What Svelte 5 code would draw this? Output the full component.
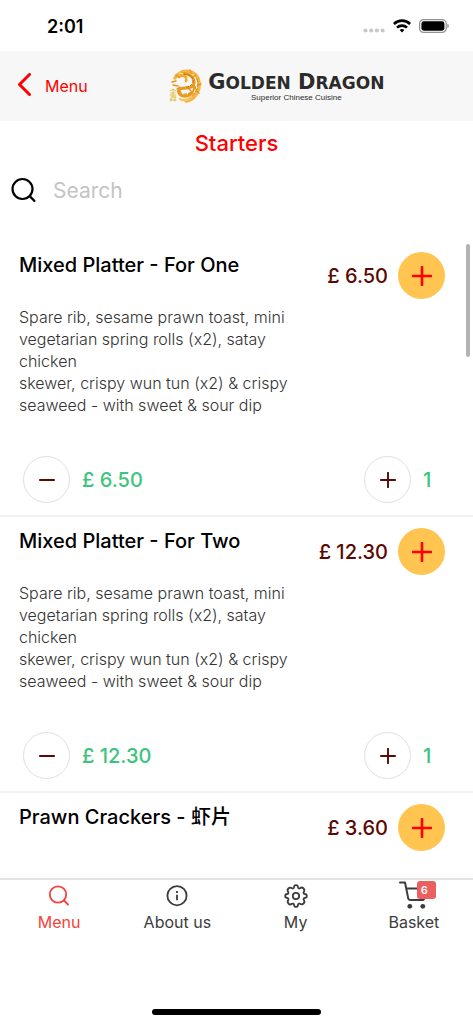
<script>
  let query = $state('');
  let activeTab = $state('Menu');

  const platter = 'Spare rib, sesame prawn toast, mini vegetarian spring rolls (x2), satay chicken\nskewer, crispy wun tun (x2) & crispy seaweed - with sweet & sour dip';

  let items = $state([
    { id: 1, name: 'Mixed Platter - For One', price: 6.5, text: platter, qty: 1 },
    { id: 2, name: 'Mixed Platter - For Two', price: 12.3, text: platter, qty: 1 },
    { id: 3, name: 'Prawn Crackers - 虾片', price: 3.6, text: '', qty: 0 }
  ]);

  let basketCount = $state(6);

  const tabs = ['Menu', 'About us', 'My', 'Basket'];

  let visible = $derived(items.filter((i) => i.name.toLowerCase().includes(query.toLowerCase())));

  function money(n) {
    return `£ ${n.toFixed(2)}`;
  }

  function add(item) {
    basketCount += item.qty || 1;
  }
</script>

{#snippet plus(size)}
  <svg width={size} height={size} viewBox="0 0 20 20" fill="none" stroke="currentColor" stroke-linecap="round" aria-hidden="true">
    <path d="M10 1v18M1 10h18" />
  </svg>
{/snippet}

<div class="screen">
  <div class="status">
    <span class="time">2:01</span>
    <div class="signals">
      <svg width="22" height="14" viewBox="0 0 22 14" fill="#c8c8c8">
        <circle cx="2.5" cy="11.5" r="2.1" /><circle cx="8.2" cy="11.5" r="2.1" /><circle cx="13.9" cy="11.5" r="2.1" /><circle cx="19.6" cy="11.5" r="2.1" />
      </svg>
      <svg width="18" height="14" viewBox="0 0 18 14" fill="none" stroke="#000" stroke-width="2.6">
        <path d="M.9 5a11.5 11.5 0 0 1 16.2 0" />
        <path d="M4 8.6a7.2 7.2 0 0 1 10 0" />
        <path d="M9 13.6l-2.4-2.5a3.5 3.5 0 0 1 4.8 0z" fill="#000" stroke="none" />
      </svg>
      <svg width="30" height="14" viewBox="0 0 30 14">
        <rect x="0.6" y="0.6" width="26.6" height="12.8" rx="4" fill="none" stroke="#929292" stroke-width="1.2" />
        <rect x="2.4" y="2.3" width="23" height="9.4" rx="2.4" />
        <path d="M28.4 4.8q1.5.6 1.5 2.2t-1.5 2.2z" fill="#929292" />
      </svg>
    </div>
  </div>

  <header>
    <button class="back">
      <svg width="16" height="26" viewBox="0 0 16 26" fill="none" stroke="currentColor" stroke-width="3" stroke-linecap="round" stroke-linejoin="round">
        <path d="M12.5 1.5L2.5 11.5l10 10" />
      </svg>
      Menu
    </button>
    <div class="brand">
      <svg width="34" height="34" viewBox="0 0 34 34" fill="none" stroke-linecap="round">
        <!-- coiled body -->
        <path d="M7 9C10 3 17 1 23 3s9 8 8 15-6 13-13 14" stroke="#f4b640" stroke-width="3.4" />
        <path d="M14 5c6-1 11 2 12 7s-3 7-8 7-9 1-7 5 8 4 12 1 4-7 3-8" stroke="#e99a1c" stroke-width="3" />
        <path d="M11 8c4-3 9 0 7 4" stroke="#f1a82c" stroke-width="2.6" />
        <path d="M12 30c3 2 8 1 11-2" stroke="#f6c662" stroke-width="2.4" />
        <!-- scales and claws -->
        <path d="M16 5c5 0 9 3 9 7s-4 6-8 6" stroke="#c5700c" stroke-dasharray="2 2" />
        <path d="M29 10c2 6 0 13-5 17M12 22c1 4 7 4 11 1" stroke="#cf7d10" stroke-dasharray="3 2" />
        <path d="M4 13l4-1M5 16l5 1M8 6l3 2M22 1l1 3M28 6l-3 2M33 15l-3 1M31 24l-3-2M9 20l3-2M20 19l3 3" stroke="#e2951f" stroke-width="1.4" />
        <path d="M19 9l2 3M27 15l2 3M15 24l4-1M27 21l-1 3M12 4l3 1" stroke="#fff0c4" />
        <!-- seal marks -->
        <path d="M2 22l3-2 3 2M3 24h4M5 21v4M2 26h6M3 28h5M5 26v3M2 31h6M3 29v3M7 28v4" stroke="#dfc050" />
      </svg>
      <div class="wordmark">
        <span class="name">G<small>OLDEN</small> D<small>RAGON</small></span>
        <span class="tagline">Superior Chinese Cuisine</span>
      </div>
    </div>
  </header>

  <h1>Starters</h1>

  <div class="search">
    <label for="search" aria-label="Search">
      <svg width="26" height="26" viewBox="0 0 26 26" fill="none" stroke="#000" stroke-width="2.2" stroke-linecap="round">
        <circle cx="11.5" cy="12" r="10" /><path d="M18.8 19.3l4.6 4.6" />
      </svg>
    </label>
    <input id="search" type="text" placeholder="Search" bind:value={query} />
  </div>

  <main>
    {#each visible as item (item.id)}
      <article>
        <div class="head">
          <h2>{item.name}</h2>
          <span class="price">{money(item.price)}</span>
          <button class="round add" aria-label="Add {item.name} to basket" onclick={() => add(item)}>
            {@render plus(20)}
          </button>
        </div>
        {#if item.text}
          <p>{item.text}</p>
          <div class="quantity">
            <button class="round" aria-label="Less" onclick={() => item.qty > 1 && item.qty--}>
              <svg width="16" height="16" viewBox="0 0 20 20" fill="none" stroke="currentColor" stroke-linecap="round"><path d="M1 10h18" /></svg>
            </button>
            <span class="total">{money(item.price * item.qty)}</span>
            <button class="round" aria-label="More" onclick={() => item.qty++}>
              {@render plus(16)}
            </button>
            <span class="count">{item.qty}</span>
          </div>
        {/if}
      </article>
    {/each}
    <div class="thumb"></div>
  </main>

  <nav>
    {#each tabs as tab}
      <button class:active={activeTab === tab} onclick={() => (activeTab = tab)}>
        <span class="icon">
          {#if tab === 'Menu'}
            <svg width="22" height="22" viewBox="0 0 22 22" fill="none" stroke="currentColor" stroke-width="1.8" stroke-linecap="round">
              <circle cx="10" cy="9.5" r="8.2" /><path d="M16 15.5l4 4" />
            </svg>
          {:else if tab === 'About us'}
            <svg width="22" height="22" viewBox="0 0 22 22" fill="none" stroke="currentColor" stroke-width="1.8">
              <circle cx="11" cy="10.7" r="9.6" /><path d="M11 9.7v5.6M11 6v2" />
            </svg>
          {:else if tab === 'My'}
            <svg width="24" height="24" viewBox="0 0 24 24" fill="none" stroke="currentColor" stroke-width="1.8" stroke-linejoin="round">
              <circle cx="12" cy="12" r="3.2" />
              <path d="M10 3.2Q10.2 1.2 12 1.2T14 3.2Q14.4 5 16 4.2Q18 2.8 19.5 4.4T19.8 8Q19 9.6 20.8 10Q22.8 10.2 22.8 12T20.8 14Q19 14.4 19.8 16Q21.2 18 19.6 19.5T16 19.8Q14.4 19 14 20.8Q13.8 22.8 12 22.8T10 20.8Q9.6 19 8 19.8Q6 21.2 4.5 19.6T4.2 16Q5 14.4 3.2 14Q1.2 13.8 1.2 12T3.2 10Q5 9.6 4.2 8Q2.8 6 4.4 4.5T8 4.2Q9.6 5 10 3.2Z" />
            </svg>
          {:else}
            <svg width="30" height="30" viewBox="0 0 30 30" fill="none" stroke="currentColor" stroke-width="2" stroke-linecap="round" stroke-linejoin="round">
              <path d="M1 1.5h5l3.2 15.6q.4 2 2.4 2h11.6q1.8 0 2.2-2L28 7.5H7.5" />
              <circle cx="10.8" cy="25.3" r="2.4" fill="currentColor" stroke="none" />
              <circle cx="23.8" cy="25.3" r="2.4" fill="currentColor" stroke="none" />
            </svg>
            <span class="badge">{basketCount}</span>
          {/if}
        </span>
        {tab}
      </button>
    {/each}
  </nav>

  <div class="home"></div>
</div>

<style>
  :global(body) { margin: 0; background: #fff; }

  .screen {
    height: 100vh; display: flex; flex-direction: column;
    font-family: Inter, "Noto Sans CJK SC", sans-serif; color: #000; background: #fff;
  }

  button { font: inherit; color: inherit; background: none; border: none; padding: 0; cursor: pointer; }

  .status { height: 51px; flex: none; display: flex; align-items: center; justify-content: space-between; padding: 0 24px 0 47px; }
  .time { font-size: 18px; font-weight: 600; line-height: 24px; padding-top: 2px; }
  .signals { display: flex; align-items: center; gap: 8px; }

  header { height: 70px; flex: none; display: flex; align-items: center; background: #f7f7f7; padding: 0 8px 0 17px; }
  .back { display: flex; align-items: center; gap: 12px; color: #f00; font-size: 16px; }
  .brand { flex: 1; display: flex; align-items: center; justify-content: center; gap: 6px; color: #2b2b2b; }
  .wordmark { display: flex; flex-direction: column; align-items: center; }
  .name { font: bold 21px/22px "DejaVu Sans", sans-serif; white-space: nowrap; }
  .name small { font-size: 17px; }
  .tagline { font: 8px/8px "Liberation Sans", Arial, sans-serif; }

  h1 { margin: 9px 0 0; text-align: center; color: #f00; font-size: 22px; line-height: 26px; font-weight: 500; flex: none; }

  .search { display: flex; align-items: center; gap: 16px; padding: 0 11px; height: 46px; margin: 11px 0 28px; flex: none; }
  .search label { display: flex; }
  .search input { flex: 1; min-width: 0; border: none; outline: none; padding: 0; background: none; font: inherit; font-size: 21px; }
  .search input::placeholder { color: #c4c4c4; opacity: 1; }

  main { flex: 1; min-height: 0; overflow: hidden; position: relative; }

  article { padding: 11px 28px 12px 19px; border-bottom: 2px solid #f1f1f1; }
  article:last-of-type { border-bottom: none; }
  .head { display: flex; align-items: center; gap: 10px; }
  h2 { flex: 1; align-self: flex-start; margin: 0; font-size: 20px; line-height: 26px; font-weight: 500; }
  .price { font-size: 20px; font-weight: 500; color: #5a0a05; white-space: nowrap; }
  p { margin: 7px 0 40px; max-width: 68%; font-size: 16px; line-height: 22px; font-weight: 300; color: #333; white-space: pre-line; }

  .round {
    box-sizing: border-box; width: 47px; height: 47px; border-radius: 50%; border: 1px solid #dde1e1;
    color: #5a0a05; display: flex; align-items: center; justify-content: center; flex: none; stroke-width: 2.4;
  }
  .add { background: #ffc550; border: none; color: #f00; stroke-width: 2.6; }

  .quantity { display: flex; align-items: center; gap: 12px; padding-left: 4px; font-size: 20px; font-weight: 500; color: #3cc47c; }
  .total { flex: 1; }
  .count { width: 22px; }

  .thumb { position: absolute; top: 3px; right: 3px; width: 4px; height: 113px; border-radius: 2px; background: #b3b3b3; }

  nav { flex: none; display: grid; grid-template-columns: repeat(4, 1fr); border-top: 2px solid #e4e4e4; }
  nav button { display: flex; flex-direction: column; align-items: center; color: #3c3c3c; font-size: 16px; line-height: 22px; }
  nav .active { color: #f4433a; }
  .icon { position: relative; height: 31px; display: flex; align-items: center; }
  .badge {
    position: absolute; top: 1px; right: -7px; width: 19px; height: 18px; border-radius: 3px;
    background: #eb5f5f; color: #fff; font-size: 11px; line-height: 18px; font-weight: 600; text-align: center; text-indent: -4px;
  }

  .home { width: 169px; height: 6px; border-radius: 3px; background: #000; margin: 76px auto 9px; flex: none; }
</style>
